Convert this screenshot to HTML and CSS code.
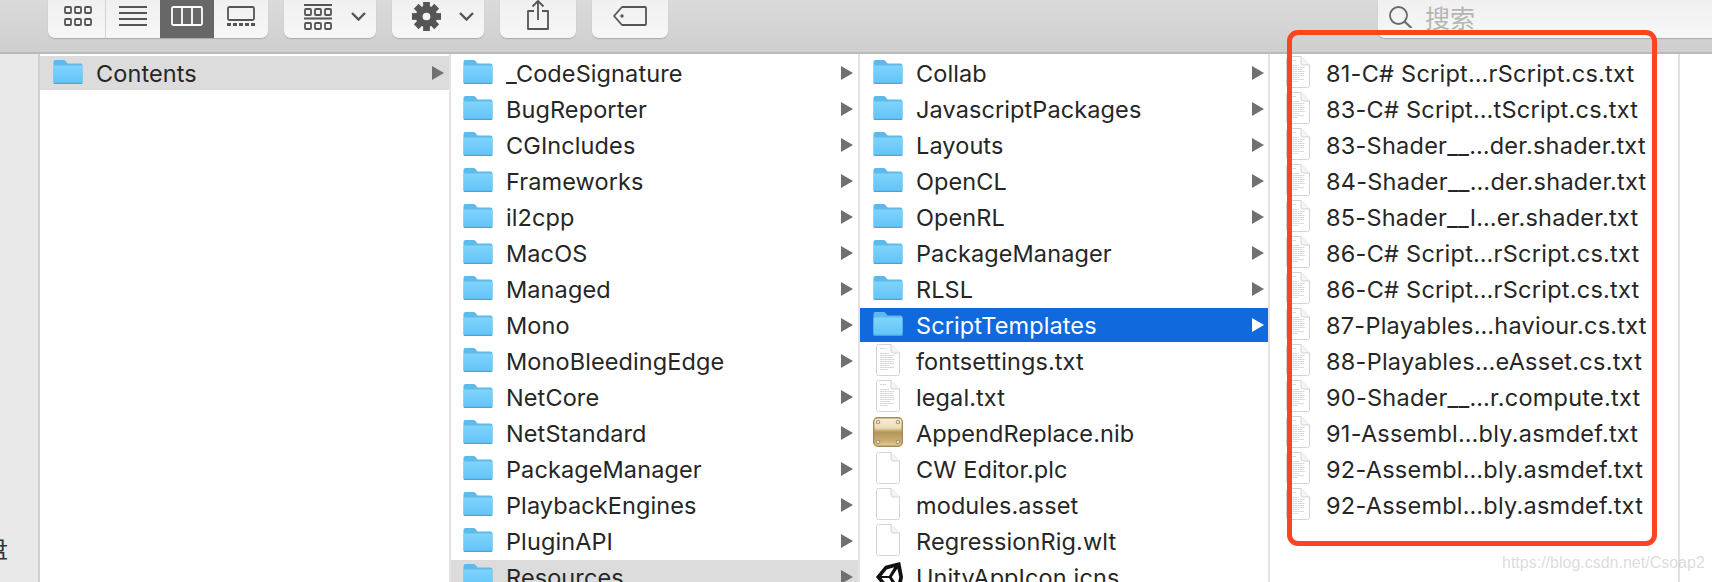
FILE: index.html
```html
<!DOCTYPE html>
<html lang="en">
<head>
<meta charset="utf-8">
<title>Finder</title>
<link rel="stylesheet" href="styles.css">
</head>
<body>
<svg class="defs" aria-hidden="true">
  <defs>
    <linearGradient id="fg" x1="0" y1="0" x2="0" y2="1">
      <stop offset="0" stop-color="#7fd4fb"/><stop offset="1" stop-color="#62c4f8"/>
    </linearGradient>
    <linearGradient id="gold" x1="0" y1="0" x2="0" y2="1">
      <stop offset="0" stop-color="#f7f0dc"/><stop offset=".36" stop-color="#eadcb4"/><stop offset=".5" stop-color="#b49559"/><stop offset=".8" stop-color="#c9ad72"/><stop offset="1" stop-color="#e4d2a4"/>
    </linearGradient>
    <symbol id="folder" viewBox="0 0 30 24">
      <path d="M.5 2q0-2 2-2h8.500q1 0 2 1.500L14.500 3.500H27.500q2 0 2 2V22q0 2-2 2h-25q-2 0-2-2z" fill="#5fb9ea"/>
      <path d="M.5 5.500h29V22q0 1.300-1.500 1.300H2Q.5 23.300.5 22z" fill="url(#fg)"/>
      <path d="M.5 22.800h29v.2q0 1-1.500 1H2q-1.500 0-1.500-1z" fill="#4ea3d3"/>
    </symbol>
    <symbol id="blank" viewBox="0 0 24 32">
      <path d="M2.500.5H15L23.500 9V29.500q0 2-2 2h-19q-2 0-2-2v-27q0-2 2-2z" fill="#fff" stroke="#d4d4d4"/>
      <path d="M15 .5V7q0 2 2 2h6.500" fill="#f4f4f4" stroke="#d4d4d4"/>
    </symbol>
    <symbol id="txtdoc" viewBox="0 0 24 32">
      <use href="#blank"/>
      <path d="M4 4.500h6M4 9.500h9M4 11.500h15M4 13.500h13M4 15.500h15M4 17.500h14M4 19.500h15M4 21.500h10M4 23.500h14M4 25.500h8" stroke="#c2c2c2" stroke-width=".7" stroke-dasharray="2 .5"/>
    </symbol>
    <symbol id="arrow" viewBox="0 0 12 14"><path d="M0 0L12 7L0 14z"/></symbol>
  </defs>
</svg>

<div class="window">
  <header class="toolbar">
    <div class="btn-group views">
      <button class="tool first" aria-label="icons">
        <svg class="ic" viewBox="0 0 28 20"><g fill="none" stroke="#555" stroke-width="1.800"><rect x="1" y="1" width="6" height="6" rx="1"/><rect x="11" y="1" width="6" height="6" rx="1"/><rect x="21" y="1" width="6" height="6" rx="1"/><rect x="1" y="13" width="6" height="6" rx="1"/><rect x="11" y="13" width="6" height="6" rx="1"/><rect x="21" y="13" width="6" height="6" rx="1"/></g></svg>
      </button>
      <button class="tool" aria-label="list">
        <svg class="ic" viewBox="0 0 28 20"><path d="M0 1h28M0 7h28M0 13h28M0 19h28" stroke="#555" stroke-width="1.800" fill="none"/></svg>
      </button>
      <button class="tool active" aria-label="columns">
        <svg class="ic wide" viewBox="0 0 32 20"><g fill="none" stroke="#fff" stroke-width="1.800"><rect x="1" y="1" width="30" height="18" rx="1.500"/><path d="M11 1v18M21 1v18"/></g></svg>
      </button>
      <button class="tool" aria-label="gallery">
        <svg class="ic" viewBox="0 0 28 20"><rect x="1" y="1" width="26" height="13" rx="1.500" fill="none" stroke="#555" stroke-width="1.800"/><path d="M0 18.500h4M6 18.500h4M12 18.500h4M18 18.500h4M24 18.500h4" stroke="#555" stroke-width="3"/></svg>
      </button>
    </div>
    <button class="btn arrange" aria-label="arrange">
      <svg class="arr-ic" viewBox="0 0 28 26"><path d="M0 1h28M0 14.500h28" stroke="#555" stroke-width="1.800"/><g fill="none" stroke="#555" stroke-width="1.800"><rect x="1" y="5" width="6" height="6" rx="1"/><rect x="11" y="5" width="6" height="6" rx="1"/><rect x="21" y="5" width="6" height="6" rx="1"/><rect x="1" y="19" width="6" height="6" rx="1"/><rect x="11" y="19" width="6" height="6" rx="1"/><rect x="21" y="19" width="6" height="6" rx="1"/></g></svg>
      <svg class="chev" viewBox="0 0 15 9"><path d="M1 1l6.500 6.500L14 1" fill="none" stroke="#555" stroke-width="2.400"/></svg>
    </button>
    <button class="btn action" aria-label="action">
      <svg class="gear" viewBox="0 0 30 30"><g fill="#555"><rect x="11.500" y="0" width="7" height="6"/><rect x="11.500" y="0" width="7" height="6" transform="rotate(45 15 15)"/><rect x="11.500" y="0" width="7" height="6" transform="rotate(90 15 15)"/><rect x="11.500" y="0" width="7" height="6" transform="rotate(135 15 15)"/><rect x="11.500" y="0" width="7" height="6" transform="rotate(180 15 15)"/><rect x="11.500" y="0" width="7" height="6" transform="rotate(225 15 15)"/><rect x="11.500" y="0" width="7" height="6" transform="rotate(270 15 15)"/><rect x="11.500" y="0" width="7" height="6" transform="rotate(315 15 15)"/></g><circle cx="15" cy="15" r="7.500" fill="none" stroke="#555" stroke-width="7"/></svg>
      <svg class="chev" viewBox="0 0 15 9"><path d="M1 1l6.500 6.500L14 1" fill="none" stroke="#555" stroke-width="2.400"/></svg>
    </button>
    <button class="btn share" aria-label="share">
      <svg class="share-ic" viewBox="0 0 22 30"><path d="M7 11H1v18h20V11h-6M11 20V1M5.500 6.500L11 1l5.500 5.500" fill="none" stroke="#555" stroke-width="1.800" stroke-linejoin="round"/></svg>
    </button>
    <button class="btn tag" aria-label="tag">
      <svg class="tag-ic" viewBox="0 0 34 20"><path d="M9 1h23q1 0 1 1v16q0 1-1 1H9L1 10z" fill="none" stroke="#555" stroke-width="1.800" stroke-linejoin="round"/><circle cx="9" cy="10" r="1.700" fill="#555"/></svg>
    </button>
    <div class="search">
      <svg class="glass" viewBox="0 0 24 22"><circle cx="9.500" cy="9.500" r="8.500" fill="none" stroke="#6a6a6a" stroke-width="1.800"/><path d="M15.500 15.500L22.500 22" stroke="#6a6a6a" stroke-width="2.200"/></svg>
      <span class="search-text">搜索</span>
    </div>
  </header>

  <main class="browser">
    <aside class="sidebar"><span class="side-text">盘</span></aside>

    <section class="col col-first">
      <div class="row sel-gray"><svg class="icon folder"><use href="#folder"/></svg><span class="name">Contents</span><svg class="tri"><use href="#arrow"/></svg></div>
    </section>

    <section class="col col-second">
      <div class="row"><svg class="icon folder"><use href="#folder"/></svg><span class="name">_CodeSignature</span><svg class="tri"><use href="#arrow"/></svg></div>
      <div class="row"><svg class="icon folder"><use href="#folder"/></svg><span class="name">BugReporter</span><svg class="tri"><use href="#arrow"/></svg></div>
      <div class="row"><svg class="icon folder"><use href="#folder"/></svg><span class="name">CGIncludes</span><svg class="tri"><use href="#arrow"/></svg></div>
      <div class="row"><svg class="icon folder"><use href="#folder"/></svg><span class="name">Frameworks</span><svg class="tri"><use href="#arrow"/></svg></div>
      <div class="row"><svg class="icon folder"><use href="#folder"/></svg><span class="name">il2cpp</span><svg class="tri"><use href="#arrow"/></svg></div>
      <div class="row"><svg class="icon folder"><use href="#folder"/></svg><span class="name">MacOS</span><svg class="tri"><use href="#arrow"/></svg></div>
      <div class="row"><svg class="icon folder"><use href="#folder"/></svg><span class="name">Managed</span><svg class="tri"><use href="#arrow"/></svg></div>
      <div class="row"><svg class="icon folder"><use href="#folder"/></svg><span class="name">Mono</span><svg class="tri"><use href="#arrow"/></svg></div>
      <div class="row"><svg class="icon folder"><use href="#folder"/></svg><span class="name">MonoBleedingEdge</span><svg class="tri"><use href="#arrow"/></svg></div>
      <div class="row"><svg class="icon folder"><use href="#folder"/></svg><span class="name">NetCore</span><svg class="tri"><use href="#arrow"/></svg></div>
      <div class="row"><svg class="icon folder"><use href="#folder"/></svg><span class="name">NetStandard</span><svg class="tri"><use href="#arrow"/></svg></div>
      <div class="row"><svg class="icon folder"><use href="#folder"/></svg><span class="name">PackageManager</span><svg class="tri"><use href="#arrow"/></svg></div>
      <div class="row"><svg class="icon folder"><use href="#folder"/></svg><span class="name">PlaybackEngines</span><svg class="tri"><use href="#arrow"/></svg></div>
      <div class="row"><svg class="icon folder"><use href="#folder"/></svg><span class="name">PluginAPI</span><svg class="tri"><use href="#arrow"/></svg></div>
      <div class="row sel-gray"><svg class="icon folder"><use href="#folder"/></svg><span class="name">Resources</span><svg class="tri"><use href="#arrow"/></svg></div>
    </section>

    <section class="col col-third">
      <div class="row"><svg class="icon folder"><use href="#folder"/></svg><span class="name">Collab</span><svg class="tri"><use href="#arrow"/></svg></div>
      <div class="row"><svg class="icon folder"><use href="#folder"/></svg><span class="name">JavascriptPackages</span><svg class="tri"><use href="#arrow"/></svg></div>
      <div class="row"><svg class="icon folder"><use href="#folder"/></svg><span class="name">Layouts</span><svg class="tri"><use href="#arrow"/></svg></div>
      <div class="row"><svg class="icon folder"><use href="#folder"/></svg><span class="name">OpenCL</span><svg class="tri"><use href="#arrow"/></svg></div>
      <div class="row"><svg class="icon folder"><use href="#folder"/></svg><span class="name">OpenRL</span><svg class="tri"><use href="#arrow"/></svg></div>
      <div class="row"><svg class="icon folder"><use href="#folder"/></svg><span class="name">PackageManager</span><svg class="tri"><use href="#arrow"/></svg></div>
      <div class="row"><svg class="icon folder"><use href="#folder"/></svg><span class="name">RLSL</span><svg class="tri"><use href="#arrow"/></svg></div>
      <div class="row sel-blue"><svg class="icon folder"><use href="#folder"/></svg><span class="name">ScriptTemplates</span><svg class="tri"><use href="#arrow"/></svg></div>
      <div class="row"><svg class="icon doc"><use href="#txtdoc"/></svg><span class="name">fontsettings.txt</span></div>
      <div class="row"><svg class="icon doc"><use href="#txtdoc"/></svg><span class="name">legal.txt</span></div>
      <div class="row">
        <svg class="icon nib" viewBox="0 0 30 30"><rect x=".7" y=".7" width="28.600" height="28.600" rx="4" fill="url(#gold)" stroke="#a98a55" stroke-width="1.400"/><g fill="#e8e0cc" stroke="#8a7648" stroke-width=".7"><circle cx="5" cy="5" r="1.800"/><circle cx="25" cy="5" r="1.800"/><circle cx="5" cy="25" r="1.800"/><circle cx="25" cy="25" r="1.800"/></g></svg>
        <span class="name">AppendReplace.nib</span></div>
      <div class="row"><svg class="icon doc"><use href="#blank"/></svg><span class="name">CW Editor.plc</span></div>
      <div class="row"><svg class="icon doc"><use href="#blank"/></svg><span class="name">modules.asset</span></div>
      <div class="row"><svg class="icon doc"><use href="#blank"/></svg><span class="name">RegressionRig.wlt</span></div>
      <div class="row">
        <svg class="icon unity" viewBox="0 0 30 32"><path fill="#111" d="M1 16L11 4L27 0L30 16L27 32L11 28z"/><path fill="#fff" d="M7 15L12.500 8L20.500 5.500L15 15zM7 17H15L20.500 26.500L12.500 24zM24 7L26 16L24 25L18 16z"/></svg>
        <span class="name">UnityAppIcon.icns</span></div>
    </section>

    <section class="col col-files">
      <div class="row"><svg class="icon mini"><use href="#txtdoc"/></svg><span class="name">81-C# Script…rScript.cs.txt</span></div>
      <div class="row"><svg class="icon mini"><use href="#txtdoc"/></svg><span class="name">83-C# Script…tScript.cs.txt</span></div>
      <div class="row"><svg class="icon mini"><use href="#txtdoc"/></svg><span class="name">83-Shader__…der.shader.txt</span></div>
      <div class="row"><svg class="icon mini"><use href="#txtdoc"/></svg><span class="name">84-Shader__…der.shader.txt</span></div>
      <div class="row"><svg class="icon mini"><use href="#txtdoc"/></svg><span class="name">85-Shader__I…er.shader.txt</span></div>
      <div class="row"><svg class="icon mini"><use href="#txtdoc"/></svg><span class="name">86-C# Script…rScript.cs.txt</span></div>
      <div class="row"><svg class="icon mini"><use href="#txtdoc"/></svg><span class="name">86-C# Script…rScript.cs.txt</span></div>
      <div class="row"><svg class="icon mini"><use href="#txtdoc"/></svg><span class="name">87-Playables…haviour.cs.txt</span></div>
      <div class="row"><svg class="icon mini"><use href="#txtdoc"/></svg><span class="name">88-Playables…eAsset.cs.txt</span></div>
      <div class="row"><svg class="icon mini"><use href="#txtdoc"/></svg><span class="name">90-Shader__…r.compute.txt</span></div>
      <div class="row"><svg class="icon mini"><use href="#txtdoc"/></svg><span class="name">91-Assembl…bly.asmdef.txt</span></div>
      <div class="row"><svg class="icon mini"><use href="#txtdoc"/></svg><span class="name">92-Assembl…bly.asmdef.txt</span></div>
      <div class="row"><svg class="icon mini"><use href="#txtdoc"/></svg><span class="name">92-Assembl…bly.asmdef.txt</span></div>
    </section>

    <section class="col-rest"></section>
  </main>

  <div class="annotation"></div>
  <div class="watermark">https://blog.csdn.net/Csoap2</div>
</div>
</body>
</html>
```

FILE: styles.css
```css
html, body {
  margin: 0;
  padding: 0;
  height: 582px;
  overflow: hidden;
  background: #fff;
}
.defs {
  display: block;
  width: 0;
  height: 0;
}
.window {
  position: relative;
  width: 1712px;
  height: 582px;
  overflow: hidden;
  font-family: Inter, "Noto Sans CJK SC", sans-serif;
  color: #262626;
}

/* toolbar */
.toolbar {
  display: flex;
  align-items: flex-start;
  height: 52px;
  box-sizing: border-box;
  padding-left: 48px;
  gap: 16px;
  background: linear-gradient(#dadada, #cfcfcf);
}
.btn-group,
.btn,
.search {
  height: 38px;
  box-sizing: border-box;
  border-radius: 0 0 7px 7px;
  background: linear-gradient(#f0f0f0, #f7f7f7);
  box-shadow: 0 1px 1px #a8a8a8;
}
.btn-group {
  display: flex;
  width: 220px;
  overflow: hidden;
}
.btn {
  display: flex;
  align-items: flex-start;
  justify-content: center;
  border: 0;
  padding: 0;
}
.tool {
  display: flex;
  align-items: flex-start;
  justify-content: center;
  width: 54px;
  height: 38px;
  border: 0;
  padding: 6px 0 0;
  background: none;
}
.tool.first {
  width: 58px;
  justify-content: flex-start;
  padding-left: 16px;
  border-right: 1px solid #d2d2d2;
}
.tool.active { background: #676767; }
.ic { width: 28px; height: 20px; }
.ic.wide { width: 32px; }
.arr-ic { width: 28px; height: 26px; margin-top: 4px; }
.arrange,
.action {
  justify-content: flex-start;
  padding-left: 20px;
  width: 92px;
}
.arrange { gap: 19px; }
.action { gap: 18px; }
.chev { width: 15px; height: 9px; margin-top: 12px; }
.gear { width: 29px; height: 29px; margin-top: 2px; }
.share { width: 76px; }
.share-ic { width: 22px; height: 30px; }
.tag { width: 76px; }
.tag-ic { width: 34px; height: 20px; margin-top: 6px; }
.search {
  display: flex;
  align-items: center;
  flex: 1;
  margin-left: 694px;
  padding: 0 0 5px 11px;
  gap: 12px;
  border-radius: 0 0 0 7px;
}
.glass { width: 24px; height: 22px; }
.search-text {
  font-size: 25px;
  line-height: 26px;
  color: #b5b5b5;
  font-family: "Noto Sans CJK SC", sans-serif;
}

/* browser */
.browser {
  display: grid;
  grid-template-columns: 40px 409px 409px 410px 410px 1fr;
  height: 530px;
  border-top: 2px solid #b9b9b9;
  box-sizing: border-box;
}
.sidebar {
  position: relative;
  box-sizing: border-box;
  background: #e9e9e9;
  border-right: 2px solid #cfcfcf;
  overflow: hidden;
}
.side-text {
  position: absolute;
  left: -16px;
  top: 479px;
  font-size: 24px;
  line-height: 30px;
  color: #333;
  font-family: "Noto Sans CJK SC", sans-serif;
}
.col {
  padding-top: 2px;
  border-left: 2px solid #e2e2e2;
  box-sizing: border-box;
  display: flex;
  flex-direction: column;
  gap: 2px;
  overflow: hidden;
  min-width: 0;
}
.col.col-first { border-left: 0; }
.col-rest { border-left: 2px solid #e2e2e2; }

.row {
  display: flex;
  align-items: center;
  flex: none;
  height: 34px;
  padding: 0 5px 0 13px;
  font-size: 23.500px;
  letter-spacing: .1px;
  white-space: nowrap;
}
.col-second .row { padding-left: 12px; }
.col-third .row { padding-right: 4px; }
.name { flex: 1; margin-left: 13px; }
.icon { flex: none; width: 30px; height: 24px; }
.icon.folder { margin-bottom: 2px; }
.icon.doc { width: 24px; height: 32px; margin: 0 3px 3px; }
.icon.nib { height: 30px; margin-bottom: 2px; }
.icon.unity { width: 28px; height: 32px; margin-left: 2px; }
.col-files .row {
  padding-left: 16px;
  letter-spacing: .25px;
}
.icon.mini { width: 24px; height: 32px; margin: 0 16px 3px 0; }
.col-files .name { margin-left: 0; }
.tri { flex: none; width: 12px; height: 14px; fill: #707070; }

.sel-gray { background: #dcdcdc; }
.sel-blue { background: #1069dd; color: #fff; }
.sel-blue .tri { fill: #fff; }

/* overlays */
.annotation {
  position: absolute;
  left: 1287px;
  top: 30px;
  width: 370px;
  height: 516px;
  box-sizing: border-box;
  border: 5px solid #fb4420;
  border-radius: 11px;
}
.watermark {
  position: absolute;
  left: 1502px;
  top: 554px;
  font-family: "Liberation Sans", Arial, sans-serif;
  font-size: 16px;
  color: rgba(190, 190, 190, .55);
}
```
